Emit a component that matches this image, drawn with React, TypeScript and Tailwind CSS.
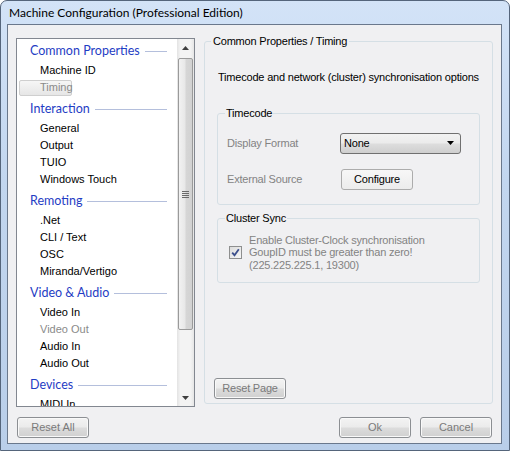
import React from "react";

const ui = "font-['Liberation_Sans',Arial,sans-serif] text-[11px]";
const segoe = "font-['Lato','Noto_Sans',sans-serif]";

type Group = { title: string; items: { label: string; selected?: boolean; disabled?: boolean }[] };

const groups: Group[] = [
  { title: "Common Properties", items: [{ label: "Machine ID" }, { label: "Timing", selected: true }] },
  {
    title: "Interaction",
    items: [{ label: "General" }, { label: "Output" }, { label: "TUIO" }, { label: "Windows Touch" }],
  },
  {
    title: "Remoting",
    items: [{ label: ".Net" }, { label: "CLI / Text" }, { label: "OSC" }, { label: "Miranda/Vertigo" }],
  },
  {
    title: "Video & Audio",
    items: [{ label: "Video In" }, { label: "Video Out", disabled: true }, { label: "Audio In" }, { label: "Audio Out" }],
  },
  { title: "Devices", items: [{ label: "MIDI In" }] },
];

const WinButton = ({ children, className = "" }: { children: React.ReactNode; className?: string }) => (
  <div
    className={`w-[72px] h-[21px] flex items-center justify-center rounded-[3px] border border-[#8c8f93] bg-[linear-gradient(#f3f3f3_0%,#ebebeb_48%,#dcdcdc_52%,#d0d0d0_100%)] text-[#7a7a7a] shadow-[inset_0_0_0_1px_#f9f9f9] ${className}`}
  >
    {children}
  </div>
);

const ScrollBar = () => (
  <div className="w-[17px] h-full flex flex-col bg-[linear-gradient(90deg,#e3e3e3,#f3f3f3_20%,#f3f3f3_80%,#e6e6e6)]">
    <div className="h-[17px] flex items-center justify-center">
      <svg width="7" height="4" viewBox="0 0 7 4">
        <path d="M0 4 L3.5 0 L7 4 Z" fill="#3f3f3f" />
      </svg>
    </div>
    <div className="mx-[1px] mt-[2px] h-[272px] rounded-[2px] border border-[#9a9a9a] bg-[linear-gradient(90deg,#f2f2f2,#e8e8e8_45%,#d6d6d6_55%,#d2d2d2)] flex items-center justify-center">
      <div className="flex flex-col gap-[1px]">
        <div className="w-[7px] h-[1px] bg-[#6a6a6a]" />
        <div className="w-[7px] h-[1px] bg-[#6a6a6a]" />
        <div className="w-[7px] h-[1px] bg-[#6a6a6a]" />
        <div className="w-[7px] h-[1px] bg-[#6a6a6a]" />
      </div>
    </div>
    <div className="flex-1" />
    <div className="h-[17px] flex items-center justify-center">
      <svg width="7" height="4" viewBox="0 0 7 4">
        <path d="M0 0 L7 0 L3.5 4 Z" fill="#3f3f3f" />
      </svg>
    </div>
  </div>
);

const NavList = () => (
  <div className="w-[179px] h-[369px] border border-[#828790] bg-white flex overflow-hidden">
    <div className="flex-1 pt-[2px] overflow-hidden">
      {groups.map((g) => (
        <div key={g.title} className="mb-[3px]">
          <div className="h-[21px] flex items-center pl-[13px] pr-[10px]">
            <span className={`${segoe} text-[12.5px] text-[#1f3dc4] whitespace-nowrap`}>{g.title}</span>
            <div className="flex-1 h-[1px] ml-[5px] bg-[#b4bfdc]" />
          </div>
          {g.items.map((it) => (
            <div key={it.label} className="h-[17px] flex items-center pl-[2px]">
              {it.selected ? (
                <div className="w-[53px] h-[16px] flex items-center pl-[20px] rounded-[2px] border border-[#cfcfcf] bg-[linear-gradient(#f6f6f6,#e6e6e6)] text-[#8a8a8a]">
                  {it.label}
                </div>
              ) : (
                <span className={`pl-[21px] whitespace-nowrap ${it.disabled ? "text-[#8a8a8a]" : "text-black"}`}>
                  {it.label}
                </span>
              )}
            </div>
          ))}
        </div>
      ))}
    </div>
    <ScrollBar />
  </div>
);

const CheckBox = () => (
  <div className="w-[13px] h-[13px] border border-[#8e8f8f] bg-[linear-gradient(135deg,#dcdcdc,#f6f6f6)] p-[1px] flex items-center justify-center">
    <svg width="9" height="9" viewBox="0 0 9 9">
      <path d="M1.2 4.6 L3.5 7.2 L7.8 1.2" fill="none" stroke="#3c4f8c" strokeWidth="1.8" />
    </svg>
  </div>
);

export default function App() {
  return (
    <div
      className={`${ui} w-[510px] h-[451px] flex flex-col rounded-t-[7px] border border-[#55657b] bg-[linear-gradient(#d3e3f7,#c2d6ef_40%,#b9cee9)]`}
    >
      <div className={`${segoe} h-[23px] flex items-center pl-[8px] text-[12px] text-black`}>
        Machine Configuration (Professional Edition)
      </div>
      <div className="ml-[6px] mr-[7px] h-[420px] border border-[#6a788c] bg-[#f0f0f2] flex flex-col">
        <div className="flex pl-[8px] pt-[13px]">
          <NavList />
          <fieldset className="ml-[9px] mt-[-5px] w-[289px] h-[371px] border border-[#d5dfe5] rounded-[3px] px-[12px] tracking-[-0.2px]">
            <legend className="ml-[-6px] px-[2px] text-black">Common Properties / Timing</legend>
            <div className="h-full flex flex-col">
              <div className="mt-[19px] ml-[1px] text-black whitespace-nowrap">
                Timecode and network (cluster) synchronisation options
              </div>
              <fieldset className="mt-[20px] h-[100px] border border-[#d5dfe5] rounded-[3px] px-[9px]">
                <legend className="ml-[-2px] px-[1px] text-black">Timecode</legend>
                <div className="flex items-center mt-[11px] h-[21px]">
                  <span className="w-[113px] text-[#838383]">Display Format</span>
                  <div className="w-[121px] h-[21px] rounded-[3px] border border-[#707070] bg-[linear-gradient(#f2f2f2,#ebebeb_48%,#dddddd_52%,#cfcfcf)] flex items-center pl-[3px] pr-[6px] text-black">
                    <span className="flex-1">None</span>
                    <svg width="7" height="4" viewBox="0 0 7 4">
                      <path d="M0 0 L7 0 L3.5 4 Z" fill="#000" />
                    </svg>
                  </div>
                </div>
                <div className="flex items-center mt-[15px] h-[21px]">
                  <span className="w-[114px] text-[#838383]">External Source</span>
                  <div className="w-[72px] h-[21px] rounded-[3px] border border-[#acacac] bg-[linear-gradient(#f7f7f7,#ececec)] flex items-center justify-center text-black">
                    Configure
                  </div>
                </div>
              </fieldset>
              <fieldset className="mt-[5px] h-[73px] border border-[#d5dfe5] rounded-[3px] px-[11px]">
                <legend className="ml-[-4px] px-[1px] text-black">Cluster Sync</legend>
                <div className="flex items-center mt-[7px]">
                  <CheckBox />
                  <div className="ml-[7px] leading-[12.5px] text-[#838383]">
                    <div>Enable Cluster-Clock synchronisation</div>
                    <div>GoupID must be greater than zero!</div>
                    <div>(225.225.225.1, 19300)</div>
                  </div>
                </div>
              </fieldset>
              <div className="flex-1" />
              <WinButton className="ml-[-3px] mb-[4px]">Reset Page</WinButton>
            </div>
          </fieldset>
        </div>
        <div className="flex items-center pl-[9px] pr-[9px] mt-[10px]">
          <WinButton>Reset All</WinButton>
          <div className="flex-1" />
          <WinButton>Ok</WinButton>
          <WinButton className="ml-[9px]">Cancel</WinButton>
        </div>
      </div>
    </div>
  );
}
